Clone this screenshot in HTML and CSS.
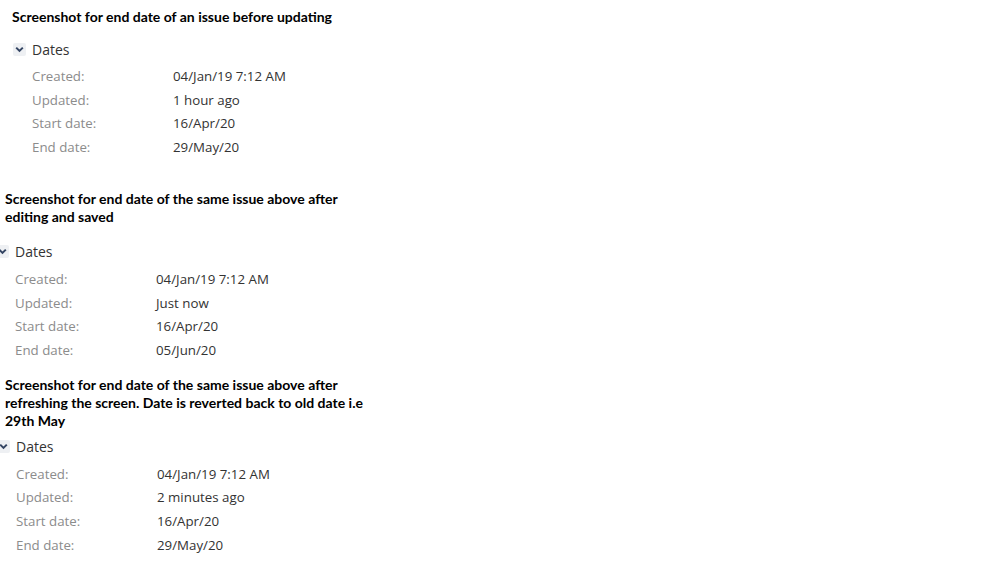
FILE: index.html
```html
<!DOCTYPE html>
<html lang="en">
<head>
<meta charset="UTF-8">
<meta name="viewport" content="width=device-width, initial-scale=1.0">
<title>Dates screenshots</title>
<link rel="stylesheet" href="styles.css">
</head>
<body>
<div class="shot shot-first">
    <p class="note">Screenshot for end date of an issue before updating</p>
    <div class="dates">
        <div class="dates-head"><span class="toggle"><svg width="9" height="7" viewBox="0 0 9 7"><path d="M1.2 1.6 L4.5 4.9 L7.8 1.6" fill="none" stroke="#344563" stroke-width="2"/></svg></span>Dates</div>
        <dl class="dates-list">
            <dt>Created:</dt><dd>04/Jan/19 7:12 AM</dd>
            <dt>Updated:</dt><dd>1 hour ago</dd>
            <dt>Start date:</dt><dd>16/Apr/20</dd>
            <dt>End date:</dt><dd>29/May/20</dd>
        </dl>
    </div>
</div>

<div class="shot shot-second">
    <p class="note">Screenshot for end date of the same issue above after editing and saved</p>
    <div class="dates">
        <div class="dates-head"><span class="toggle"><svg width="9" height="7" viewBox="0 0 9 7"><path d="M1.2 1.6 L4.5 4.9 L7.8 1.6" fill="none" stroke="#344563" stroke-width="2"/></svg></span>Dates</div>
        <dl class="dates-list">
            <dt>Created:</dt><dd>04/Jan/19 7:12 AM</dd>
            <dt>Updated:</dt><dd>Just now</dd>
            <dt>Start date:</dt><dd>16/Apr/20</dd>
            <dt>End date:</dt><dd>05/Jun/20</dd>
        </dl>
    </div>
</div>

<div class="shot shot-third">
    <p class="note">Screenshot for end date of the same issue above after refreshing the screen. Date is reverted back to old date i.e 29th May</p>
    <div class="dates">
        <div class="dates-head"><span class="toggle"><svg width="9" height="7" viewBox="0 0 9 7"><path d="M1.2 1.6 L4.5 4.9 L7.8 1.6" fill="none" stroke="#344563" stroke-width="2"/></svg></span>Dates</div>
        <dl class="dates-list">
            <dt>Created:</dt><dd>04/Jan/19 7:12 AM</dd>
            <dt>Updated:</dt><dd>2 minutes ago</dd>
            <dt>Start date:</dt><dd>16/Apr/20</dd>
            <dt>End date:</dt><dd>29/May/20</dd>
        </dl>
    </div>
</div>
</body>
</html>
```

FILE: styles.css
```css
body {
    margin: 0;
    background-color: #fff;
    font-family: "Open Sans", sans-serif;
    color: #333;
}
.shot {
    width: 375px;
}
.note {
    margin: 0;
    font-family: Lato, sans-serif;
    font-weight: bold;
    font-size: 14px;
    line-height: 18px;
    color: #000;
}
.shot-first {
    padding: 8px 0 0 12px;
}
.shot-second {
    padding: 30px 0 0 5px;
}
.shot-third {
    padding: 13px 0 0 5px;
}
.dates {
    margin-top: 14px;
}
.shot-first .dates {
    margin-left: 1px;
}
.shot-second .dates {
    margin: 17px 0 0 -9px;
}
.shot-third .dates {
    margin: 8px 0 0 -8px;
}
.dates-head {
    display: flex;
    align-items: center;
    height: 18px;
    font-size: 14px;
    color: #333;
}
.toggle {
    display: flex;
    align-items: center;
    justify-content: center;
    width: 13px;
    height: 13px;
    margin: 0 6px 0 0;
    border-radius: 2px;
    background-color: #eef0f3;
}
.dates-list {
    display: grid;
    grid-template-columns: 141px auto;
    margin: 7px 0 0 19px;
    font-size: 13.3px;
    line-height: 23.7px;
}
.dates-list dt {
    color: #8c8c8c;
}
.dates-list dd {
    margin: 0;
    color: #333;
}
```
